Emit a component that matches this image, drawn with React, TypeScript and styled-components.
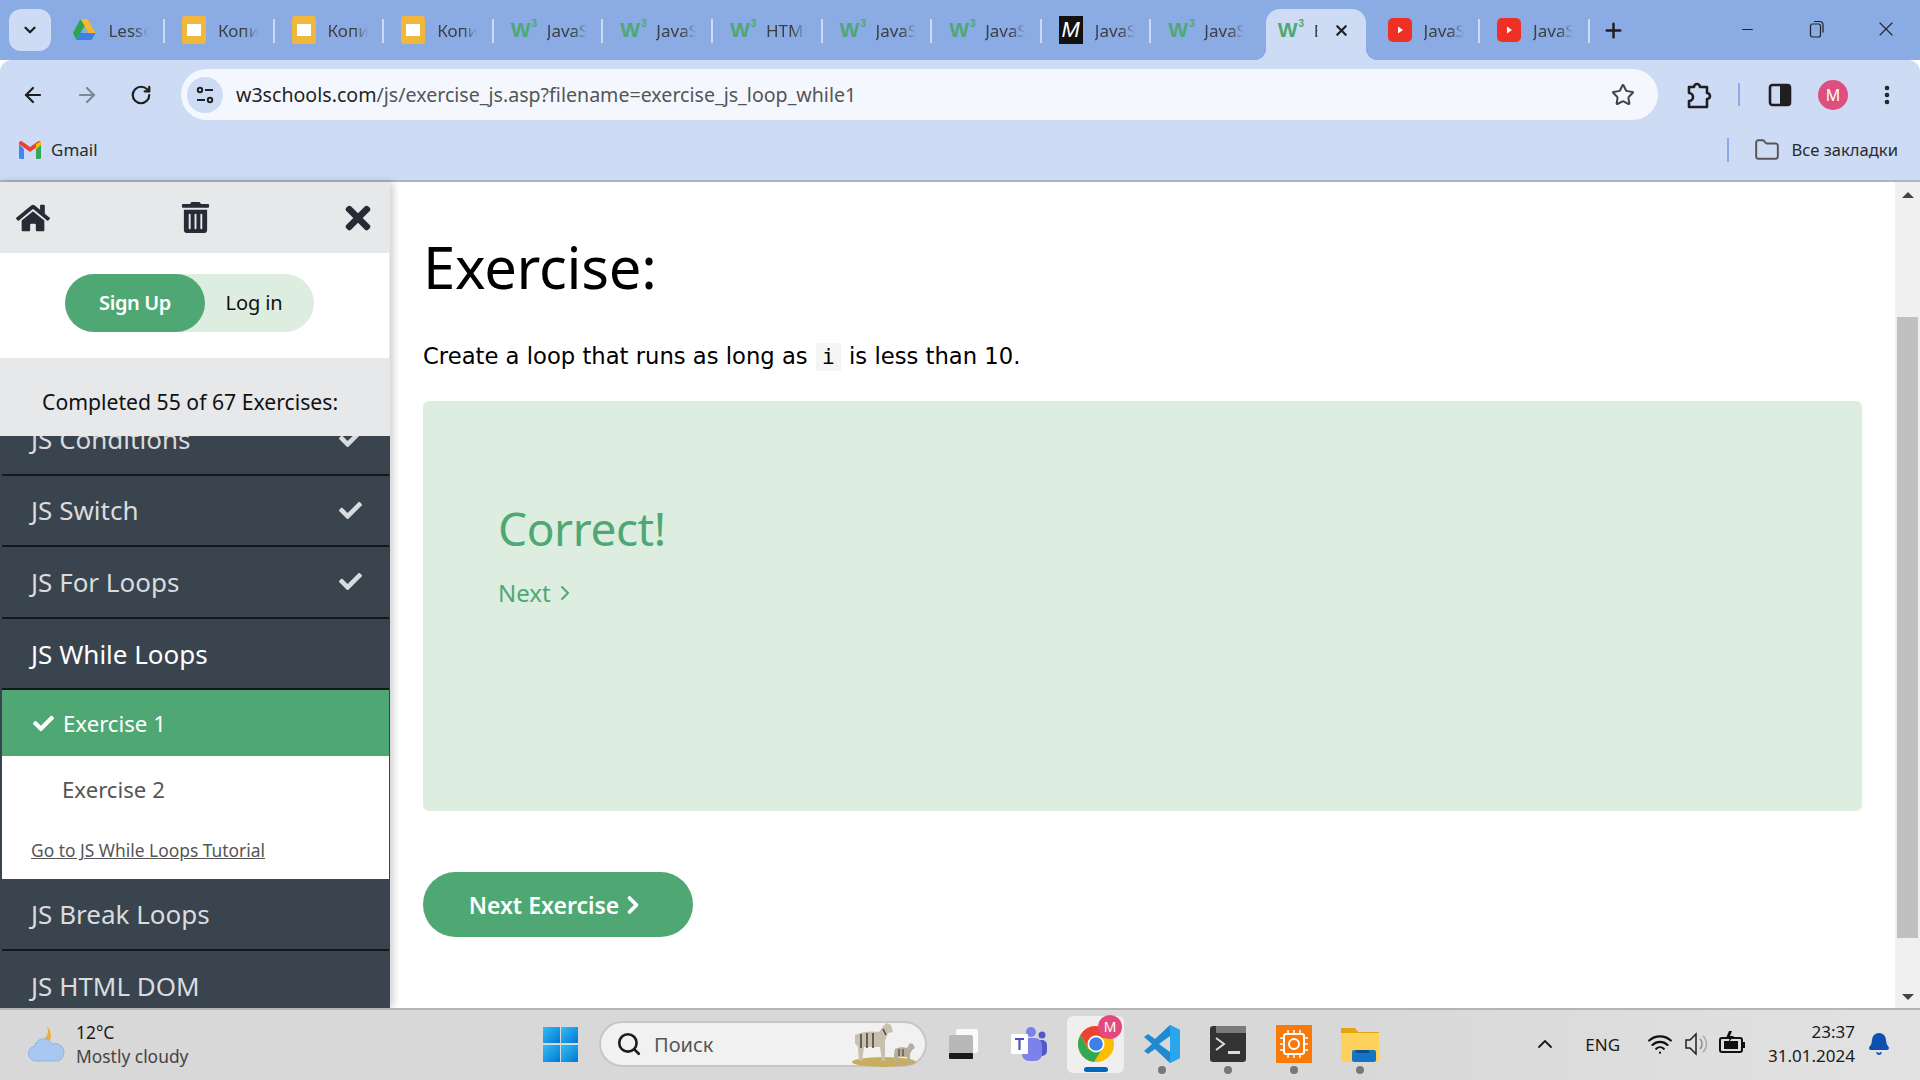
import styled, { createGlobalStyle } from 'styled-components'
import { ArrowLeft, ArrowRight, RotateCw, Star, MoreVertical, Folder, Minus, X, Plus, ChevronDown, ChevronUp, ChevronRight, Search, Wifi, Bell } from 'lucide-react'
import { FaHome, FaTrashAlt, FaTimes, FaCheck } from 'react-icons/fa'

const tabs = [
  { icon: 'drive', label: 'Lesson' },
  { icon: 'slides', label: 'Копия' },
  { icon: 'slides', label: 'Копия' },
  { icon: 'slides', label: 'Копия' },
  { icon: 'w3', label: 'JavaScript' },
  { icon: 'w3', label: 'JavaScript' },
  { icon: 'w3', label: 'HTML' },
  { icon: 'w3', label: 'JavaScript' },
  { icon: 'w3', label: 'JavaScript' },
  { icon: 'mdn', label: 'JavaScript' },
  { icon: 'w3', label: 'JavaScript', noSep: true },
  { icon: 'w3', label: 'Exercise', active: true },
  { icon: 'yt', label: 'JavaScript' },
  { icon: 'yt', label: 'JavaScript' },
]

function TabIcon({ kind }: { kind: string }) {
  if (kind === 'drive') {
    return (
      <svg width="24" height="24" viewBox="0 0 24 24">
        <path d="M8.5 1h7l8 14h-7z" fill="#f6b92b" />
        <path d="M8.5 1L1 15l3.5 7 8-14z" fill="#2da44e" />
        <path d="M4.5 22h15l4-7H8z" fill="#3f7fe8" />
      </svg>
    )
  }
  if (kind === 'slides') {
    return (
      <svg width="24" height="28" viewBox="0 0 24 28">
        <rect width="24" height="28" rx="3" fill="#efb73c" />
        <rect x="5" y="8" width="14" height="12" fill="#fff" />
      </svg>
    )
  }
  if (kind === 'w3') return <W3Mark>W<sup>3</sup></W3Mark>
  if (kind === 'mdn') return <MdnMark>M</MdnMark>
  return (
    <svg width="24" height="24" viewBox="0 0 24 24">
      <rect width="24" height="24" rx="5" fill="#ee3124" />
      <path d="M10 8.5l5 3.5-5 3.5z" fill="#fff" />
    </svg>
  )
}

export default function App() {
  return (
    <Page>
      <GlobalStyle />
      <TabStrip>
        <TabMenu><ChevronDown size={18} strokeWidth={3} /></TabMenu>
        {tabs.map((tab, i) => (
          <Tab key={i} $active={tab.active} $noSep={tab.noSep}>
            <TabIconSlot><TabIcon kind={tab.icon} /></TabIconSlot>
            <TabLabel $active={tab.active}>{tab.label}</TabLabel>
            {tab.active && <TabClose><X size={17} strokeWidth={3} /></TabClose>}
          </Tab>
        ))}
        <NewTab><Plus size={23} strokeWidth={2.6} /></NewTab>
        <WindowButtons>
          <WindowButton><Minus size={17} strokeWidth={1.4} /></WindowButton>
          <WindowButton>
            <svg width="16" height="18" viewBox="0 0 16 18" fill="none" stroke="#222" strokeWidth="1.2">
              <rect x="1.5" y="4" width="10" height="13" rx="2" />
              <path d="M5 1.5h6a3 3 0 0 1 3 3v8" />
            </svg>
          </WindowButton>
          <WindowButton><X size={24} strokeWidth={1.1} /></WindowButton>
        </WindowButtons>
      </TabStrip>

      <Toolbar>
        <NavButton><ArrowLeft size={24} strokeWidth={2.2} /></NavButton>
        <NavButton $muted><ArrowRight size={24} strokeWidth={2.2} /></NavButton>
        <NavButton><RotateCw size={22} strokeWidth={2.4} /></NavButton>
        <UrlBar>
          <SiteInfo>
            <svg width="20" height="20" viewBox="0 0 20 20" fill="none" stroke="#222" strokeWidth="2">
              <circle cx="5" cy="5" r="2.2" />
              <path d="M10 5h8M2 15h8" />
              <circle cx="15" cy="15" r="2.2" />
            </svg>
          </SiteInfo>
          <UrlText><b>w3schools.com</b>/js/exercise_js.asp?filename=exercise_js_loop_while1</UrlText>
          <Star size={24} strokeWidth={2} color="#444" />
        </UrlBar>
        <ToolbarActions>
          <svg width="26" height="30" viewBox="0 0 26 30" fill="none" stroke="#1f1f1f" strokeWidth="2.6">
            <path d="M3 7h5a3 3 0 0 1 6 0h7v6a3 3 0 0 1 0 6v8H3v-6a3 3 0 0 0 0-8z" strokeLinejoin="round" />
          </svg>
          <ToolbarDivider />
          <svg width="24" height="24" viewBox="0 0 24 24">
            <rect x="2" y="2" width="20" height="20" rx="2.5" fill="none" stroke="#1f1f1f" strokeWidth="2.6" />
            <rect x="12" y="2" width="10" height="20" fill="#1f1f1f" />
          </svg>
          <Avatar>M</Avatar>
          <MoreVertical size={24} strokeWidth={2.6} color="#222" />
        </ToolbarActions>
      </Toolbar>

      <Bookmarks>
        <GmailLink>
          <svg width="22" height="18" viewBox="0 0 22 18">
            <path d="M0 3v13.5A1.5 1.5 0 0 0 1.5 18H5V8z" fill="#4285f4" />
            <path d="M22 3v13.5a1.5 1.5 0 0 1-1.5 1.5H17V8z" fill="#34a853" />
            <path d="M0 3l11 8 11-8V2a2 2 0 0 0-3.2-1.6L11 6 3.2.4A2 2 0 0 0 0 2z" fill="#ea4335" />
            <path d="M17 3.2L22 0v4l-5 4z" fill="#fbbc04" />
          </svg>
          Gmail
        </GmailLink>
        <AllBookmarks>
          <Folder size={26} strokeWidth={1.8} color="#555" />
          Все закладки
        </AllBookmarks>
      </Bookmarks>

      <Viewport>
        <Sidebar>
          <SideTools>
            <FaHome size={34} />
            <FaTrashAlt size={31} />
            <FaTimes size={36} />
          </SideTools>
          <AuthArea>
            <AuthPill>
              <SignUp>Sign Up</SignUp>
              <LogIn>Log in</LogIn>
            </AuthPill>
          </AuthArea>
          <Completed>Completed 55 of 67 Exercises:</Completed>
          <ChapterClip>
            <ChapterList>
              <Chapter>JS Conditions<FaCheck size={23} /></Chapter>
              <Chapter>JS Switch<FaCheck size={23} /></Chapter>
              <Chapter>JS For Loops<FaCheck size={23} /></Chapter>
              <Chapter $open>JS While Loops</Chapter>
              <ExerciseRow $current><FaCheck size={21} />Exercise 1</ExerciseRow>
              <ExerciseRow>Exercise 2</ExerciseRow>
              <TutorialLink>Go to JS While Loops Tutorial</TutorialLink>
              <Chapter>JS Break Loops</Chapter>
              <Chapter>JS HTML DOM</Chapter>
            </ChapterList>
          </ChapterClip>
        </Sidebar>

        <Main>
          <Heading>Exercise:</Heading>
          <Task>Create a loop that runs as long as <Code>i</Code> is less than 10.</Task>
          <ResultBox>
            <CorrectTitle>Correct!</CorrectTitle>
            <NextLink>Next<ChevronRight size={24} strokeWidth={2} /></NextLink>
          </ResultBox>
          <NextButton>Next Exercise<ChevronRight size={28} strokeWidth={3.2} /></NextButton>
        </Main>

        <ScrollBar>
          <ScrollArrow />
          <ScrollThumb />
          <ScrollArrow $down />
        </ScrollBar>
      </Viewport>

      <Taskbar>
        <Weather>
          <svg width="38" height="36" viewBox="0 0 38 36">
            <path d="M19 0c3 8-1 15-13 17l4 4c12 1 17-12 9-21z" fill="#f2a93b" />
            <path d="M9 35a7.500 7.500 0 0 1-2-15 9 9 0 0 1 17-2 8.500 8.500 0 0 1 6 17z" fill="#a9c8ef" stroke="#8fb5e6" />
          </svg>
          <WeatherText>
            <span>12°C</span>
            <WeatherNote>Mostly cloudy</WeatherNote>
          </WeatherText>
        </Weather>
        <WinLogo>
          <WinPane /><WinPane /><WinPane /><WinPane />
        </WinLogo>
        <SearchBox>
          <Search size={26} strokeWidth={2.4} color="#1c1c1c" />
          <SearchText>Поиск</SearchText>
          <svg width="70" height="50" viewBox="0 0 70 50">
            <ellipse cx="35" cy="43" rx="32" ry="5" fill="#c9ad5e" />
            <path d="M6 16c8-4 18-4 24-3l7-9 5 2 2 7-5 1-3 8v20h-3l-2-14H15l-2 14h-3l-1-14-3-4z" fill="#c9bfae" />
            <path d="M12 15v14M18 14v15M24 14v15M34 10l3 6" stroke="#4b4742" strokeWidth="1.6" />
            <path d="M46 30c4-2 9-2 12-1l3-5 3 1 2 4-3 2-2 4v11h-2l-1-8h-9l-1 8h-2l-1-10z" fill="#b7ad9b" />
            <path d="M50 30v7M54 30v7" stroke="#4b4742" strokeWidth="1.2" />
          </svg>
        </SearchBox>
        <TaskIcons>
          <TaskSlot>
            <svg width="34" height="34" viewBox="0 0 34 34">
              <rect x="10" y="2" width="22" height="24" rx="2" fill="#fafafa" />
              <rect x="3" y="8" width="24" height="24" rx="2" fill="#b8b8b8" />
              <rect x="3" y="26" width="24" height="6" rx="1" fill="#1a1a1a" />
            </svg>
          </TaskSlot>
          <TaskSlot>
            <svg width="38" height="38" viewBox="0 0 38 38">
              <circle cx="21" cy="7" r="5" fill="#7b83eb" />
              <circle cx="32" cy="10" r="3.5" fill="#5059c9" />
              <rect x="24" y="15" width="13" height="16" rx="5" fill="#5059c9" />
              <rect x="12" y="13" width="20" height="23" rx="7" fill="#7b83eb" />
              <rect x="1" y="9" width="17" height="20" rx="1" fill="#fff" />
              <path d="M5 13h9v2h-3.4v10H8.400V15H5z" fill="#4b53bc" />
            </svg>
          </TaskSlot>
          <ChromeSlot>
            <svg width="38" height="38" viewBox="0 0 38 38">
              <circle cx="19" cy="19" r="18" fill="#fbbc04" />
              <path d="M19 1a18 18 0 0 0-15.600 9L11 23l8-10h16A18 18 0 0 0 19 1z" fill="#ea4335" />
              <path d="M3.400 10A18 18 0 0 0 17 37l8-13-14 0z" fill="#34a853" />
              <circle cx="19" cy="19" r="8.500" fill="#fff" />
              <circle cx="19" cy="19" r="6.800" fill="#3f7fe8" />
            </svg>
            <ChromeBadge>M</ChromeBadge>
            <ActiveBar />
          </ChromeSlot>
          <TaskSlot $dot>
            <svg width="36" height="38" viewBox="0 0 36 38">
              <path d="M26 0l10 5v28l-10 5-15-14-7 5-4-3 8-7-8-7 4-3 7 5z" fill="#1f8ad2" />
              <path d="M26 0l10 5v28l-10 5z" fill="#2aa7ec" />
              <path d="M26 11L15 19l11 8z" fill="#d8d8d8" />
            </svg>
          </TaskSlot>
          <TaskSlot $dot>
            <svg width="36" height="36" viewBox="0 0 36 36">
              <rect width="36" height="36" rx="3" fill="#333" />
              <rect x="6" width="30" height="7" fill="#7a7a7a" />
              <path d="M6 12l8 6-8 6" fill="none" stroke="#ddd" strokeWidth="2" />
              <rect x="18" y="25" width="12" height="3" fill="#ddd" />
            </svg>
          </TaskSlot>
          <TaskSlot $dot>
            <svg width="36" height="38" viewBox="0 0 36 38">
              <rect width="36" height="38" fill="#f97a0b" />
              <rect x="8" y="9" width="20" height="20" rx="2" fill="none" stroke="#fff" strokeWidth="2" />
              <circle cx="18" cy="19" r="5" fill="none" stroke="#fff" strokeWidth="2" />
              <path d="M12 5v4M18 5v4M24 5v4M12 29v4M18 29v4M24 29v4M4 13h4M4 19h4M4 25h4M28 13h4M28 19h4M28 25h4" stroke="#fff" strokeWidth="1.500" />
            </svg>
          </TaskSlot>
          <TaskSlot $dot>
            <svg width="38" height="36" viewBox="0 0 38 36">
              <path d="M0 2h14l3 4h21v30H0z" fill="#e2a50f" />
              <rect y="7" width="38" height="29" fill="#fcd25b" />
              <rect x="11" y="24" width="24" height="12" rx="2" fill="#1574c4" />
              <rect x="15" y="24" width="13" height="3" fill="#0a4f92" />
            </svg>
          </TaskSlot>
        </TaskIcons>
        <Tray>
          <ChevronUp size={24} strokeWidth={1.8} color="#1a1a1a" />
          <TrayLang>ENG</TrayLang>
          <TrayIcons>
            <Wifi size={26} strokeWidth={2} color="#111" />
            <svg width="24" height="28" viewBox="0 0 24 28" fill="none" stroke="#222" strokeWidth="1.500">
              <path d="M2 10h4l6-6v20l-6-6H2z" />
              <path d="M16 9a7 7 0 0 1 0 10" stroke="#888" />
              <path d="M19 6a11 11 0 0 1 0 16" stroke="#aaa" />
            </svg>
            <svg width="26" height="26" viewBox="0 0 26 26">
              <rect x="1" y="7" width="22" height="14" rx="2" fill="none" stroke="#111" strokeWidth="2" />
              <rect x="5" y="10" width="14" height="8" fill="#111" />
              <rect x="23" y="11" width="3" height="6" fill="#111" />
              <path d="M10 0l-3 7h4l-2 5 6-7h-4l2-5z" fill="#111" />
            </svg>
          </TrayIcons>
          <Clock>
            <span>23:37</span>
            <span>31.01.2024</span>
          </Clock>
          <Bell size={24} fill="#0f4fb0" color="#0f4fb0" />
        </Tray>
      </Taskbar>
    </Page>
  )
}

const GlobalStyle = createGlobalStyle`
  html, body {
    margin: 0;
    padding: 0;
    overflow: hidden;
    font-family: "Noto Sans", "Open Sans", sans-serif;
  }
`

const Page = styled.div`
  width: 1920px;
  height: 1080px;
  display: flex;
  flex-direction: column;
  overflow: hidden;
  background: #fff;
`

const TabStrip = styled.div`
  height: 60px;
  flex: none;
  display: flex;
  background: #8aabe4;
  padding-left: 9px;
`

const TabMenu = styled.div`
  width: 42px;
  height: 42px;
  margin: 9px 4.400px 0 0;
  border-radius: 12px;
  background: #cddbf5;
  color: #1f1f1f;
  display: flex;
  align-items: center;
  justify-content: center;
  flex: none;
`

const Tab = styled.div<{ $active?: boolean; $noSep?: boolean }>`
  position: relative;
  flex: none;
  width: ${(p) => (p.$active ? '100px' : '109.6px')};
  height: 51px;
  margin: 9px ${(p) => (p.$active ? '4.800px' : '0')} 0;
  padding: 0 0 9px ${(p) => (p.$active ? '12px' : '17px')};
  box-sizing: border-box;
  display: flex;
  align-items: center;
  gap: 12px;
  border-radius: 14px 14px 0 0;
  background: ${(p) => (p.$active ? '#cddbf5' : 'transparent')};

  ${(p) =>
    !p.$active && !p.$noSep
      ? `&::after {
    content: '';
    position: absolute;
    right: 0;
    top: 10px;
    width: 2px;
    height: 24px;
    background: #cddbf5;
  }`
      : ''}

  ${(p) =>
    p.$active
      ? `&::before, &::after {
    content: '';
    position: absolute;
    bottom: 0;
    width: 12px;
    height: 12px;
  }
  &::before {
    left: -12px;
    background: radial-gradient(circle at 0 0, transparent 12px, #cddbf5 12.5px);
  }
  &::after {
    right: -12px;
    background: radial-gradient(circle at 100% 0, transparent 12px, #cddbf5 12.5px);
  }`
      : ''}
`

const TabIconSlot = styled.span`
  width: 24px;
  height: 28px;
  flex: none;
  display: flex;
  align-items: center;
  justify-content: flex-start;
`

const TabLabel = styled.span<{ $active?: boolean }>`
  width: ${(p) => (p.$active ? '4px' : '40px')};
  overflow: hidden;
  white-space: nowrap;
  font-size: 17px;
  color: #3c4043;
  -webkit-mask-image: linear-gradient(to right, #000 65%, transparent);
  mask-image: linear-gradient(to right, #000 65%, transparent);
`

const TabClose = styled.span`
  display: flex;
  color: #1f1f1f;
  margin-left: 3px;
`

const W3Mark = styled.span`
  display: inline-flex;
  font-family: "Liberation Sans", sans-serif;
  font-weight: 700;
  font-size: 21px;
  line-height: 28px;
  color: #4fa874;

  sup {
    font-size: 10px;
    line-height: 16px;
    margin-left: 1px;
    vertical-align: top;
  }
`

const MdnMark = styled.span`
  width: 24px;
  height: 28px;
  background: #111;
  color: #fff;
  font-family: "Liberation Sans", sans-serif;
  font-style: italic;
  font-size: 22px;
  text-align: center;
  line-height: 28px;
`

const NewTab = styled.div`
  margin: 9px 0 0 12px;
  height: 42px;
  display: flex;
  align-items: center;
  color: #1f1f1f;
`

const WindowButtons = styled.div`
  margin-left: auto;
  display: flex;
  height: 60px;
`

const WindowButton = styled.div`
  width: 69px;
  display: flex;
  align-items: center;
  justify-content: center;
  padding-bottom: 2px;
  box-sizing: border-box;
  color: #222;
`

const Toolbar = styled.div`
  height: 60px;
  flex: none;
  display: flex;
  align-items: flex-end;
  background: #cddbf5;
  border-radius: 12px 12px 0 0;
  margin-top: 0;
  padding-left: 6px;
  box-sizing: border-box;
`

const NavButton = styled.div<{ $muted?: boolean }>`
  width: 54px;
  height: 51px;
  display: flex;
  align-items: center;
  justify-content: center;
  color: ${(p) => (p.$muted ? '#7e8794' : '#1f1f1f')};
`

const UrlBar = styled.div`
  width: 1477px;
  height: 51px;
  margin-left: 13px;
  padding: 0 23px 0 6px;
  box-sizing: border-box;
  border-radius: 26px;
  background: #f4f7fd;
  display: flex;
  align-items: center;
`

const SiteInfo = styled.div`
  width: 36px;
  height: 36px;
  border-radius: 50%;
  background: #cddbf5;
  display: flex;
  align-items: center;
  justify-content: center;
  flex: none;
`

const UrlText = styled.div`
  flex: 1;
  margin-left: 13px;
  font-size: 19.6px;
  color: #555;
  white-space: nowrap;

  b {
    font-weight: 400;
    color: #1f1f1f;
  }
`

const ToolbarActions = styled.div`
  height: 51px;
  display: flex;
  align-items: center;
  margin-left: 28px;
  gap: 27px;
`

const ToolbarDivider = styled.div`
  width: 2px;
  height: 23px;
  background: #8aabe4;
  margin: 0 1px 0 -1px;
`

const Avatar = styled.div`
  width: 30px;
  height: 30px;
  border-radius: 50%;
  background: #de4f7d;
  color: #fff;
  font-size: 16px;
  display: flex;
  align-items: center;
  justify-content: center;
  margin: 0 0 0 -1px;
`

const Bookmarks = styled.div`
  height: 62px;
  flex: none;
  box-sizing: border-box;
  background: #cddbf5;
  border-bottom: 2px solid #a9b5cc;
  display: flex;
  align-items: center;
  justify-content: space-between;
  padding: 0 22px 1px 19px;
`

const GmailLink = styled.div`
  display: flex;
  align-items: center;
  gap: 10px;
  font-size: 17px;
  color: #2b2b2b;
`

const AllBookmarks = styled.div`
  display: flex;
  align-items: center;
  gap: 11px;
  font-size: 16.6px;
  color: #2b2b2b;
  border-left: 2px solid #8aabe4;
  padding-left: 25px;
  height: 24px;
`

const Viewport = styled.div`
  flex: 1;
  min-height: 0;
  display: flex;
  background: #fff;
`

const Sidebar = styled.aside`
  width: 390px;
  flex: none;
  display: flex;
  flex-direction: column;
  background: #e7e8ea;
  box-shadow: 3px 0 8px rgba(0, 0, 0, 0.2);
  position: relative;
  z-index: 1;
`

const SideTools = styled.div`
  height: 71px;
  flex: none;
  padding: 0 14px 0 16px;
  box-sizing: border-box;
  display: flex;
  align-items: center;
  justify-content: space-between;
  color: #282a35;
`

const AuthArea = styled.div`
  height: 105px;
  flex: none;
  margin-right: 1px;
  background: #fff;
  padding: 21px 0 0 65px;
  box-sizing: border-box;
`

const AuthPill = styled.div`
  width: 249px;
  height: 58px;
  border-radius: 29px;
  background: #ddede0;
  display: flex;
`

const SignUp = styled.div`
  width: 140px;
  border-radius: 29px;
  background: #4fa874;
  color: #fff;
  font-size: 20px;
  font-weight: 600;
  letter-spacing: -0.4px;
  padding-bottom: 2px;
  box-sizing: border-box;
  display: flex;
  align-items: center;
  justify-content: center;
`

const LogIn = styled.div`
  flex: 1;
  font-size: 20px;
  letter-spacing: -0.1px;
  color: #111;
  display: flex;
  align-items: center;
  justify-content: center;
  padding: 0 11px 2px 0;
`

const Completed = styled.div`
  height: 78px;
  flex: none;
  padding: 28px 0 0 42px;
  box-sizing: border-box;
  font-size: 21.2px;
  line-height: 32px;
  color: #111;
  white-space: nowrap;
`

const ChapterClip = styled.div`
  flex: 1;
  min-height: 0;
  overflow: hidden;
  background: #3a444e;
`

const ChapterList = styled.div`
  margin-top: -32px;
  padding: 0 1px 0 2px;
  display: flex;
  flex-direction: column;
`

const Chapter = styled.div<{ $open?: boolean }>`
  height: 71.6px;
  flex: none;
  box-sizing: border-box;
  padding: 0 27px 0 29px;
  border-bottom: 2px solid #14181c;
  display: flex;
  align-items: center;
  justify-content: space-between;
  font-size: 26px;
  color: ${(p) => (p.$open ? '#fff' : '#d9dcdf')};
`

const ExerciseRow = styled.div<{ $current?: boolean }>`
  height: 66px;
  flex: none;
  box-sizing: border-box;
  display: flex;
  align-items: center;
  gap: 9px;
  padding-left: ${(p) => (p.$current ? '31px' : '60px')};
  background: ${(p) => (p.$current ? '#4fa874' : '#fff')};
  color: ${(p) => (p.$current ? '#fff' : '#555')};
  font-size: 22.2px;
`

const TutorialLink = styled.div`
  height: 57px;
  flex: none;
  box-sizing: border-box;
  background: #fff;
  padding: 14px 0 0 29px;
  font-size: 17.4px;
  line-height: 28px;
  color: #555;
  text-decoration: underline;
`

const Main = styled.main`
  flex: 1;
  min-width: 0;
  padding: 0 33px 0 33px;
  display: flex;
  flex-direction: column;
  align-items: flex-start;
`

const Heading = styled.h1`
  margin: 46px 0 0;
  font-size: 58px;
  line-height: 78px;
  font-weight: 400;
  letter-spacing: -0.3px;
  color: #000;
`

const Task = styled.p`
  margin: 34px 0 0;
  font-family: "DejaVu Sans", Verdana, sans-serif;
  font-size: 22.7px;
  line-height: 32px;
  color: #000;
`

const Code = styled.code`
  display: inline-block;
  width: 25px;
  height: 28px;
  line-height: 28px;
  margin: 0 1px;
  text-align: center;
  background: #f5f5f5;
  font-family: "DejaVu Sans Mono", "Liberation Mono", monospace;
  font-size: 21px;
`

const ResultBox = styled.div`
  align-self: stretch;
  height: 410px;
  flex: none;
  margin-top: 29px;
  padding: 97px 0 0 75px;
  box-sizing: border-box;
  border-radius: 6px;
  background: #ddede0;
`

const CorrectTitle = styled.div`
  font-size: 46px;
  line-height: 60px;
  font-weight: 400;
  letter-spacing: -0.4px;
  color: #4fa874;
`

const NextLink = styled.div`
  margin-top: 18px;
  font-size: 24px;
  line-height: 34px;
  color: #4fa874;
  display: flex;
  align-items: center;
  gap: 2px;
`

const NextButton = styled.div`
  width: 270px;
  height: 65px;
  margin-top: 61px;
  border-radius: 33px;
  background: #4fa874;
  color: #fff;
  font-size: 23px;
  font-weight: 600;
  display: flex;
  align-items: center;
  justify-content: center;
`

const ScrollBar = styled.div`
  width: 25px;
  flex: none;
  background: #f0f0f0;
  display: flex;
  flex-direction: column;
  align-items: center;
`

const ScrollArrow = styled.div<{ $down?: boolean }>`
  width: 0;
  height: 0;
  margin: ${(p) => (p.$down ? 'auto 0 8px' : '10px 0 0')};
  border-left: 6px solid transparent;
  border-right: 6px solid transparent;
  ${(p) => (p.$down ? 'border-top: 6px solid #444;' : 'border-bottom: 6px solid #444;')}
`

const ScrollThumb = styled.div`
  width: 21px;
  height: 621px;
  margin-top: 119px;
  background: #c0c0c0;
`

const Taskbar = styled.footer`
  height: 72px;
  flex: none;
  box-sizing: border-box;
  background: linear-gradient(to right, #d8d8d8, #d8d8d8 70%, #e2e2e2);
  border-top: 2px solid #b4b4b4;
  display: flex;
  align-items: center;
  padding-bottom: 2px;
  position: relative;
  z-index: 2;
`

const Weather = styled.div`
  width: 543px;
  flex: none;
  padding-left: 28px;
  box-sizing: border-box;
  display: flex;
  align-items: center;
  gap: 10px;
`

const WeatherText = styled.div`
  display: flex;
  flex-direction: column;
  font-size: 17.4px;
  line-height: 24px;
  color: #1a1a1a;
`

const WeatherNote = styled.span`
  color: #444;
`

const WinLogo = styled.div`
  width: 35px;
  height: 35px;
  flex: none;
  display: grid;
  grid-template: 1fr 1fr / 1fr 1fr;
  gap: 1.500px;
`

const WinPane = styled.div`
  background: linear-gradient(135deg, #35bdf5, #0078d4);
`

const SearchBox = styled.div`
  width: 328px;
  height: 46px;
  margin-left: 21px;
  padding: 0 6px 0 15px;
  box-sizing: border-box;
  flex: none;
  border: 2px solid #c6c6c6;
  border-radius: 23px;
  background: #f1f1f1;
  display: flex;
  align-items: center;
`

const SearchText = styled.span`
  flex: 1;
  margin-left: 12px;
  font-size: 20px;
  color: #555;
`

const TaskIcons = styled.div`
  display: flex;
  margin-left: 3px;
`

const TaskSlot = styled.div<{ $dot?: boolean }>`
  position: relative;
  width: 66px;
  height: 57px;
  display: flex;
  align-items: center;
  justify-content: center;

  ${(p) =>
    p.$dot
      ? `&::after {
    content: '';
    position: absolute;
    bottom: -1px;
    left: 29px;
    width: 8px;
    height: 8px;
    border-radius: 50%;
    background: #777;
  }`
      : ''}
`

const ChromeSlot = styled(TaskSlot)`
  border-radius: 6px;
  background: #efefef;
  width: 57px;
  margin: 0 5px;
`

const ChromeBadge = styled.span`
  position: absolute;
  top: -1px;
  right: 2px;
  width: 24px;
  height: 24px;
  border-radius: 50%;
  background: #e5487d;
  color: #fff;
  font-size: 14px;
  display: flex;
  align-items: center;
  justify-content: center;
`

const ActiveBar = styled.span`
  position: absolute;
  bottom: 1px;
  left: 17px;
  width: 24px;
  height: 5px;
  border-radius: 3px;
  background: #0067c0;
`

const Tray = styled.div`
  margin-left: auto;
  padding-right: 29px;
  display: flex;
  align-items: center;
  color: #1a1a1a;
`

const TrayLang = styled.span`
  margin-left: 28px;
  font-size: 17px;
`

const TrayIcons = styled.div`
  display: flex;
  align-items: center;
  gap: 11px;
  margin-left: 27px;
`

const Clock = styled.div`
  display: flex;
  flex-direction: column;
  align-items: flex-end;
  margin: 0 12px 0 23px;
  font-size: 17px;
  line-height: 24px;
`
